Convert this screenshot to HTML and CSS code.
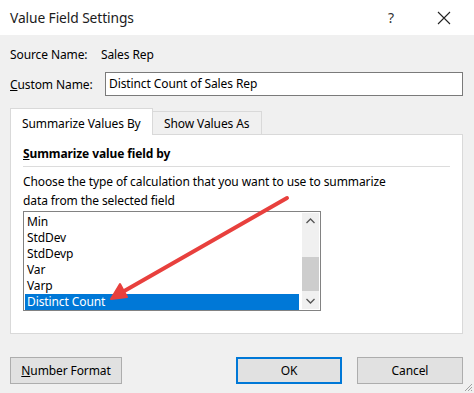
FILE: index.html
```html
<!DOCTYPE html>
<html lang="en">
<head>
    <meta charset="UTF-8">
    <title>Value Field Settings</title>
    <link rel="stylesheet" href="styles.css">
</head>
<body>
    <div class="dialog">
        <div class="titlebar">
            <span class="title">Value Field Settings</span>
            <span class="help">?</span>
            <svg class="close" width="14" height="14" viewBox="0 0 14 14">
                <path d="M1 1 L13 13 M13 1 L1 13" stroke="#222" stroke-width="1.1" fill="none"/>
            </svg>
        </div>

        <div class="content">
            <div class="field-row source">
                <span class="label">Source Name:</span>
                <span class="value">Sales Rep</span>
            </div>
            <div class="field-row custom">
                <span class="label"><u>C</u>ustom Name:</span>
                <div class="input">Distinct Count of Sales Rep</div>
            </div>

            <div class="tabs">
                <div class="tab active">Summarize Values By</div>
                <div class="tab">Show Values As</div>
            </div>

            <div class="panel">
                <div class="group-title"><u>S</u>ummarize value field by</div>
                <div class="separator"></div>
                <p class="hint">Choose the type of calculation that you want to use to summarize<br>data from the selected field</p>

                <div class="listbox">
                    <ul class="items">
                        <li>Min</li>
                        <li>StdDev</li>
                        <li>StdDevp</li>
                        <li>Var</li>
                        <li>Varp</li>
                        <li class="selected">Distinct Count</li>
                    </ul>
                    <div class="scrollbar">
                        <svg class="arrow-btn" width="17" height="17" viewBox="0 0 17 17">
                            <path d="M4.5 10 L8.5 6 L12.5 10" stroke="#555" stroke-width="1.3" fill="none"/>
                        </svg>
                        <div class="track">
                            <div class="thumb"></div>
                        </div>
                        <svg class="arrow-btn" width="17" height="17" viewBox="0 0 17 17">
                            <path d="M4.5 7 L8.5 11 L12.5 7" stroke="#555" stroke-width="1.3" fill="none"/>
                        </svg>
                    </div>
                </div>
            </div>

            <div class="buttons">
                <button class="button number"><u>N</u>umber Format</button>
                <div class="spacer"></div>
                <button class="button ok">OK</button>
                <button class="button cancel">Cancel</button>
            </div>
        </div>

        <!-- panah merah di atas daftar -->
        <svg class="annotation" width="474" height="393" viewBox="0 0 474 393">
            <path d="M287 198 L119 294" stroke="#e8403d" stroke-width="4" stroke-linecap="round" fill="none"/>
            <path d="M111 299 L120 284 L127 297 Z" fill="#e8403d" stroke="#e8403d" stroke-width="2" stroke-linejoin="round"/>
        </svg>

        <svg class="grip" width="10" height="10" viewBox="0 0 10 10">
            <path d="M9 2 L2 9 M9 5 L5 9 M9 8 L8 9" stroke="#a0a0a0" stroke-width="1" fill="none"/>
        </svg>
    </div>
</body>
</html>
```

FILE: styles.css
```css
body {
    margin: 0;
    background-color: #f0f0f0;
    font-family: "Noto Sans", "Open Sans", sans-serif;
    font-size: 12px;
    letter-spacing: -0.1px;
    color: #000;
}

.dialog {
    position: relative;
    width: 474px;
    height: 393px;
    overflow: hidden;
}

.titlebar {
    display: flex;
    align-items: center;
    height: 35px;
    background-color: #fff;
    padding-left: 10px;
}

.title {
    flex: 1;
    font-size: 13.8px;
    color: #1b1b1b;
}

.help {
    font-size: 14px;
    color: #333;
    margin-right: 43px;
}

.close {
    margin-right: 23px;
}

.content {
    padding: 0 11px 0 10px;
}

.field-row {
    display: flex;
    align-items: center;
}

.field-row.source {
    height: 28px;
    margin-top: 5px;
}

.field-row.custom {
    height: 26px;
    margin-top: 3px;
}

.label {
    width: 91px;
}

.custom .label {
    width: 95px;
}

.input {
    flex: 1;
    height: 22px;
    line-height: 22px;
    border: 1px solid #7a7a7a;
    background-color: #fff;
    padding-left: 3px;
}

.tabs {
    display: flex;
    align-items: flex-end;
    height: 26px;
    margin-top: 11px;
}

.tab {
    height: 23px;
    line-height: 24px;
    padding: 0 10px;
    border: 1px solid #d9d9d9;
    border-bottom: none;
    background-color: #f0f0f0;
    box-sizing: border-box;
    white-space: nowrap;
}

.tab.active {
    width: 143px;
    height: 27px;
    line-height: 30px;
    background-color: #fff;
    position: relative;
    top: 1px;
    padding-left: 11px;
}

.tab + .tab {
    width: 109px;
    border-left: none;
    padding-left: 11px;
}

.panel {
    height: 198px;
    background-color: #fff;
    border: 1px solid #d9d9d9;
    padding: 0 11px 0 12px;
}

.group-title {
    font-weight: bold;
    margin-top: 10px;
    line-height: 18px;
}

.separator {
    height: 1px;
    background-color: #dcdcdc;
    margin: 3px 0 0 0;
    width: 427px;
}

.hint {
    margin: 5px 0 0 0;
    line-height: 19px;
}

.listbox {
    display: flex;
    width: 296px;
    height: 98px;
    margin-top: 1px;
    border: 1px solid #828282;
}

.items {
    list-style: none;
    margin: 0;
    padding: 2px 1px 0 1px;
    flex: 1;
}

.items li {
    height: 16px;
    line-height: 16px;
    padding-left: 2px;
}

.items li.selected {
    background-color: #0078d7;
    color: #fff;
}

.scrollbar {
    width: 17px;
    margin: 1px 1px 1px 2px;
    display: flex;
    flex-direction: column;
    background-color: #f0f0f0;
}

.track {
    flex: 1;
    position: relative;
}

.thumb {
    position: absolute;
    left: 0;
    right: 0;
    top: 27px;
    height: 34px;
    background-color: #cdcdcd;
}

.buttons {
    display: flex;
    margin-top: 23px;
}

.spacer {
    flex: 1;
}

.button {
    height: 27px;
    font-family: inherit;
    font-size: 12px;
    letter-spacing: -0.1px;
    background-color: #e1e1e1;
    border: 1px solid #adadad;
    padding: 0;
    color: #000;
}

.button.number {
    width: 112px;
}

.button.ok {
    width: 106px;
    border: 2px solid #0078d7;
    margin-right: 15px;
}

.button.cancel {
    width: 106px;
}

.annotation {
    position: absolute;
    left: 0;
    top: 0;
    pointer-events: none;
}

.grip {
    position: absolute;
    right: 1px;
    bottom: 1px;
}
```
